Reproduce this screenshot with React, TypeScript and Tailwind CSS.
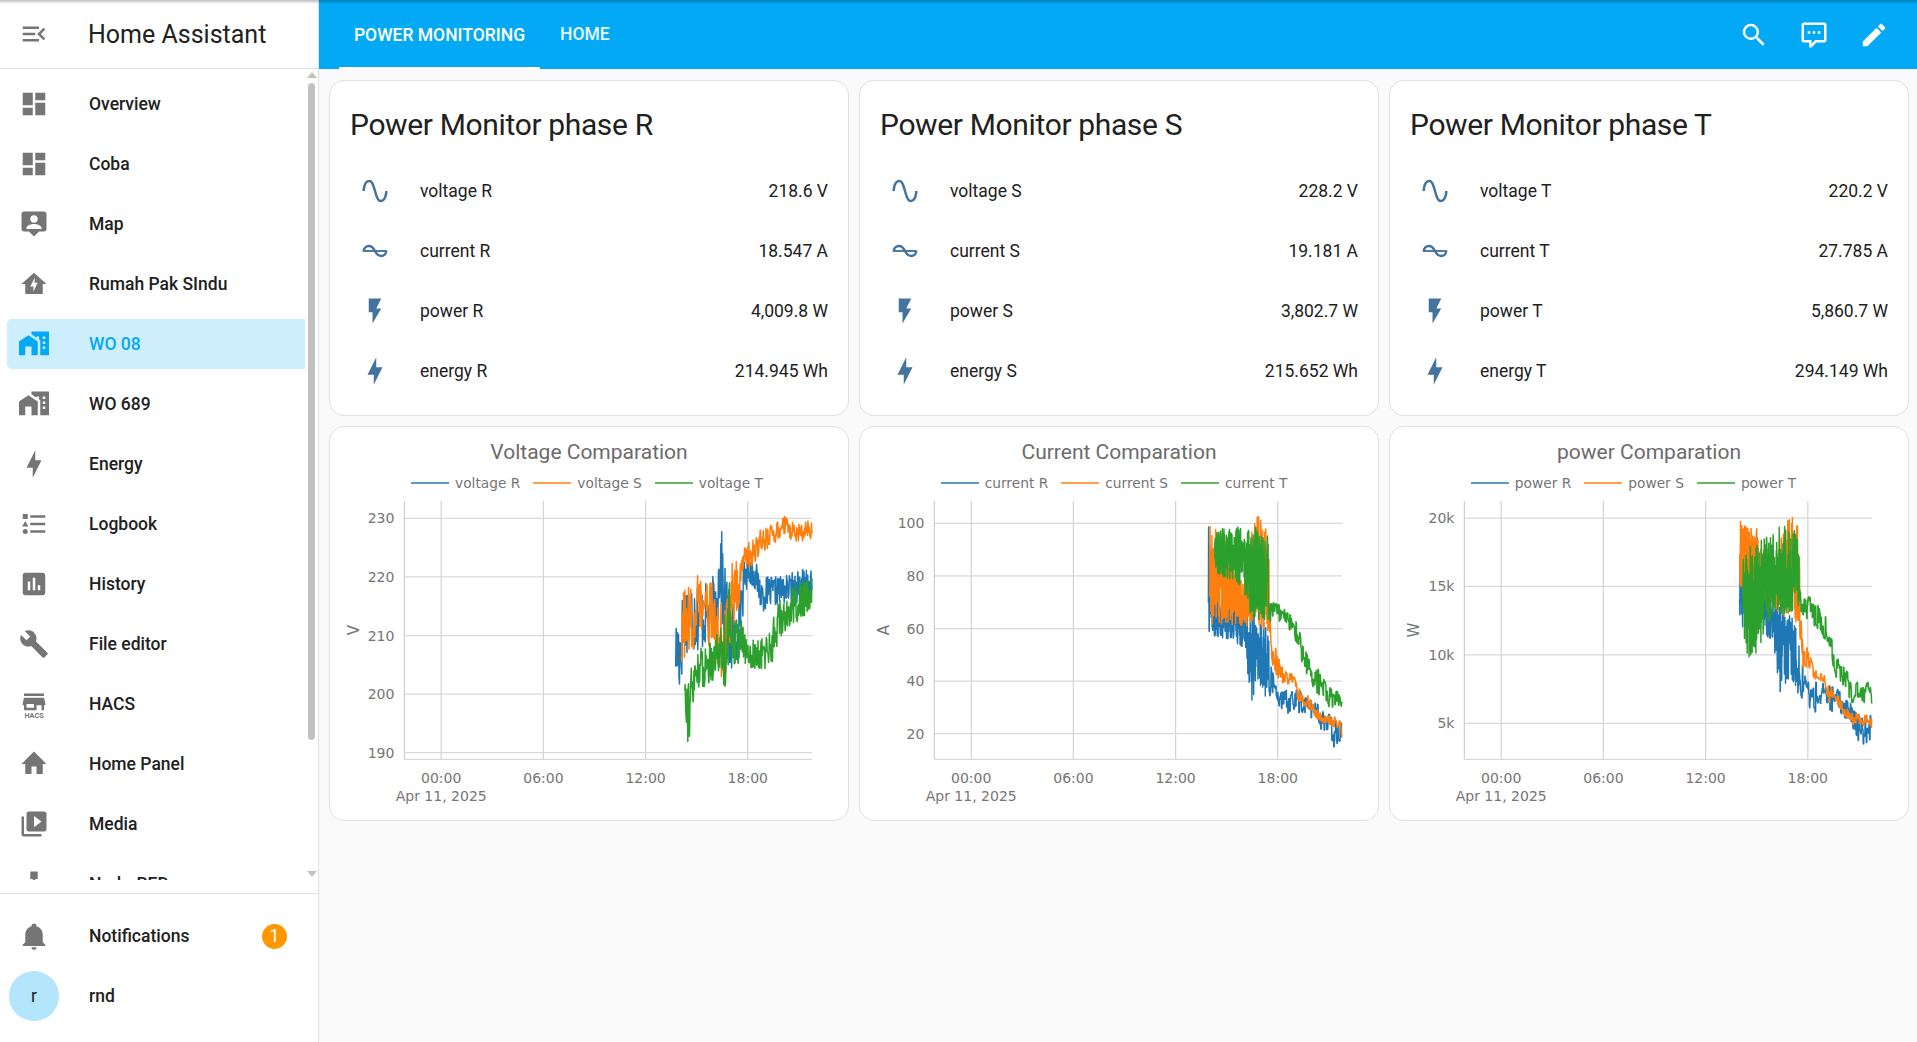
type Pt = [number, number, number];

const ICONS = {
  dashboard: "M13,3V9H21V3M13,21H21V11H13M3,21H11V15H3M3,13H11V3H3V13Z",
  map: "M4 2C2.9 2 2 2.9 2 4V16C2 17.1 2.9 18 4 18H8L12 22L16 18H20C21.1 18 22 17.1 22 16V4C22 2.9 21.1 2 20 2H4M12 5C13.66 5 15 6.34 15 8S13.66 11 12 11 9 9.66 9 8 10.34 5 12 5M18 16H6V15C6 13 10 11.9 12 11.9S18 13 18 15V16Z",
  homeBolt: "M12 3L2 12H5V20H19V12H22L12 3ZM11.5 18V14H9L12.5 7V11H15L11.5 18Z",
  city: "M0,21V10L7.5,5L15,10V21H10V14H5V21H0M24,2V21H17V8.93L16,8.27V6H14V6.93L10,4.27V2H24M21,14H19V16H21V14M21,10H19V12H21V10M21,6H19V8H21V6Z",
  bolt: "M11 15H6L13 1V9H18L11 23V15Z",
  flash: "M7,2V13H10V22L17,10H13L17,2H7Z",
  sine: "M16.5,21C13.5,21 12.31,16.76 11.05,12.28C10.14,9.04 9,5 7.5,5C4.11,5 4,11.93 4,12H2C2,11.63 2.06,3 7.5,3C10.5,3 11.71,7.25 12.97,11.74C13.83,14.8 15,19 16.5,19C19.94,19 20.03,12.07 20.03,12H22.03C22.03,12.37 21.97,21 16.5,21Z",
  list: "M5,9.5L7.5,14H2.5L5,9.5M3,4H7V8H3V4M5,20A2,2 0 0,0 7,18A2,2 0 0,0 5,16A2,2 0 0,0 3,18A2,2 0 0,0 5,20M9,5V7H21V5H9M9,19H21V17H9V19M9,13H21V11H9V13Z",
  chart: "M19 3H5C3.9 3 3 3.9 3 5V19C3 20.1 3.9 21 5 21H19C20.1 21 21 20.1 21 19V5C21 3.9 20.1 3 19 3M9 17H7V10H9V17M13 17H11V7H13V17M17 17H15V13H17V17Z",
  wrench: "M22.7,19L13.6,9.9C14.5,7.6 14,4.9 12.1,3C10.1,1 7.1,0.6 4.7,1.7L9,6L6,9L1.6,4.7C0.4,7.1 0.9,10.1 2.9,12.1C4.8,14 7.5,14.5 9.8,13.6L18.9,22.7C19.3,23.1 19.9,23.1 20.3,22.7L22.6,20.4C23.1,20 23.1,19.3 22.7,19Z",
  home: "M10,20V14H14V20H19V12H22L12,2L2,12H5V20H10Z",
  media: "M4,6H2V20A2,2 0 0,0 4,22H18V20H4V6M20,2H8A2,2 0 0,0 6,4V16A2,2 0 0,0 8,18H20A2,2 0 0,0 22,16V4A2,2 0 0,0 20,2M12,14.5V5.5L18,10L12,14.5Z",
  sitemap: "M9,2V8H11V11H5C3.89,11 3,11.89 3,13V16H1V22H7V16H5V13H11V16H9V22H15V16H13V13H19V16H17V22H23V16H21V13C21,11.89 20.11,11 19,11H13V8H15V2H9Z",
  bell: "M21,19V20H3V19L5,17V11C5,7.9 7.03,5.17 10,4.29C10,4.19 10,4.1 10,4A2,2 0 0,1 12,2A2,2 0 0,1 14,4C14,4.1 14,4.19 14,4.29C16.97,5.17 19,7.9 19,11V17L21,19M14,21A2,2 0 0,1 12,23A2,2 0 0,1 10,21",
  menu: "M21,15.61L19.59,17L14.58,12L19.59,7L21,8.39L17.44,12L21,15.61M3,6H16V8H3V6M3,13V11H13V13H3M3,18V16H16V18H3Z",
  search: "M9.5,3A6.5,6.5 0 0,1 16,9.5C16,11.11 15.41,12.59 14.44,13.73L14.71,14H15.5L20.5,19L19,20.5L14,15.5V14.71L13.73,14.44C12.59,15.41 11.11,16 9.5,16A6.5,6.5 0 0,1 3,9.5A6.5,6.5 0 0,1 9.5,3M9.5,5C7,5 5,7 5,9.5C5,12 7,14 9.5,14C12,14 14,12 14,9.5C14,7 12,5 9.5,5Z",
  comment: "M9,22A1,1 0 0,1 8,21V18H4A2,2 0 0,1 2,16V4C2,2.89 2.9,2 4,2H20A2,2 0 0,1 22,4V16A2,2 0 0,1 20,18H13.9L10.2,21.71C10,21.9 9.75,22 9.5,22V22H9M10,16V19.08L13.08,16H20V4H4V16H10M17,11H15V9H17V11M13,11H11V9H13V11M9,11H7V9H9V11Z",
  pencil: "M20.71,7.04C21.1,6.65 21.1,6 20.71,5.63L18.37,3.29C18,2.9 17.35,2.9 16.96,3.29L15.12,5.12L18.87,8.87M3,17.25V21H6.75L17.81,9.93L14.06,6.18L3,17.25Z",
  store: "M12,15H6V12H12M21,13V11L20,7H4L3,11V13H4V17H14V13H18V17H20V13M20,3.5H4V5.5H20V3.5Z",
};

function Icon({ d, className }: { d: string; className?: string }) {
  return (
    <svg viewBox="0 0 24 24" fill="currentColor" className={"w-[30px] h-[30px] shrink-0 " + (className ?? "")}>
      <path d={d} />
    </svg>
  );
}

function HacsIcon() {
  return (
    <svg viewBox="0 0 24 24" fill="currentColor" className="w-[30px] h-[30px] shrink-0">
      <path d={ICONS.store} />
      <text x="12" y="23.4" textAnchor="middle" fontSize="5.8" fontWeight="700" fontFamily="Roboto, sans-serif">
        HACS
      </text>
    </svg>
  );
}

function CurrentIcon() {
  return (
    <svg viewBox="0 0 24 24" fill="none" stroke="currentColor" strokeWidth="2" className="w-[30px] h-[30px] shrink-0">
      <path d="M3 12.5C3 9.5 5 8 7.2 8C9.6 8 11 10 12 12C13 14 14.6 16 16.8 16C19 16 21 14.5 21 11.5" />
      <path d="M3 12H21" strokeWidth="1.5" />
    </svg>
  );
}

// seeded so the noisy traces come out the same on every run
function makeRandom(seed: number) {
  let s = seed;
  return () => {
    s = (s * 1664525 + 1013904223) % 4294967296;
    return s / 4294967296;
  };
}

// after tailFrom the signal calms down: samples are held longer so it looks stepped, not solid
function tracePath(env: Pt[], seed: number, n: number, tailFrom: number, toY: (v: number) => number) {
  const rand = makeRandom(seed);
  const start = env[0][0];
  const end = env[env.length - 1][0];
  let r = 0.5;
  let seg = 0;
  let d = "";
  for (let i = 0; i <= n; i++) {
    const t = start + ((end - start) * i) / n;
    while (seg < env.length - 2 && t > env[seg + 1][0]) seg++;
    const a = env[seg];
    const b = env[seg + 1];
    const k = (t - a[0]) / (b[0] - a[0]);
    const lo = a[1] + (b[1] - a[1]) * k;
    const hi = a[2] + (b[2] - a[2]) * k;
    if (t < tailFrom || i % 3 === 0) r = rand();
    const x = 110.2 + 17.03 * t;
    d += (i ? "L" : "M") + x.toFixed(2) + " " + toY(lo + (hi - lo) * r).toFixed(2);
  }
  return d;
}

const COLORS = ["#1f77b4", "#ff7f0e", "#2ca02c"];

const charts = [
  {
    title: "Voltage Comparation",
    unit: "V",
    names: ["voltage R", "voltage S", "voltage T"],
    legendPad: "pr-[4px]",
    ticks: [
      ["230", 230],
      ["220", 220],
      ["210", 210],
      ["200", 200],
      ["190", 190],
    ] as [string, number][],
    top: [230, 23.3],
    bottom: [190, 257.7],
    n: 290,
    tailFrom: 99,
    series: [
      [[13.77, 202, 213], [14, 199, 216], [14.3, 207, 219], [14.8, 207, 221], [15.3, 207, 219], [15.8, 209, 219], [16.2, 211, 222], [16.4, 216, 230], [16.6, 206, 224], [16.9, 203, 218], [17.3, 203, 215], [17.6, 211, 221], [18, 219, 224.5], [18.4, 218, 223], [18.8, 214, 220], [19.5, 215, 220], [20.5, 215.5, 220.5], [21, 215.5, 222], [21.77, 215.5, 221]],
      [[14.1, 203, 216], [14.3, 205, 218], [14.8, 207, 219], [15, 211, 222], [15.5, 209, 219], [16, 207, 219], [16.4, 203, 217], [16.55, 199, 214], [16.9, 207, 222], [17.4, 212, 223], [17.7, 221, 225], [18.3, 221.5, 226.5], [18.8, 223.5, 228.5], [19.5, 225.5, 229], [20.2, 227.5, 230.5], [20.8, 225.5, 229], [21.77, 226.5, 230]],
      [[14.3, 199, 205], [14.5, 191, 204], [14.8, 195, 206], [15, 201, 208], [15.5, 201, 208], [15.8, 202, 210], [16.3, 203, 212], [16.6, 200, 214], [16.9, 205, 220], [17.2, 205, 214], [17.6, 205, 213], [18, 204, 210], [18.5, 204, 209], [19, 204, 210], [19.4, 205, 212], [19.8, 209, 216], [20.4, 211, 217], [20.8, 212, 219], [21.3, 213, 219.5], [21.77, 215, 220]],
    ] as Pt[][],
  },
  {
    title: "Current Comparation",
    unit: "A",
    names: ["current R", "current S", "current T"],
    legendPad: "pr-[10px]",
    ticks: [
      ["100", 100],
      ["80", 80],
      ["60", 60],
      ["40", 40],
      ["20", 20],
    ] as [string, number][],
    top: [100, 28.3],
    bottom: [20, 238.7],
    n: 620,
    tailFrom: 17.5,
    series: [
      [[13.93, 58, 100], [14.5, 56, 72], [15, 56, 70], [15.5, 55, 75], [16, 52, 70], [16.5, 32, 68], [16.8, 40, 60], [17.2, 35, 64], [17.5, 32, 55], [17.8, 36, 40], [18.3, 26, 36], [18.8, 28, 38], [19.4, 28, 36], [20, 26, 34], [20.5, 22, 30], [21, 19, 28], [21.3, 15, 26], [21.77, 18, 26]],
      [[14, 60, 101], [14.4, 62, 98], [15, 60, 95], [15.5, 62, 84], [16, 60, 78], [16.4, 62, 100], [16.9, 60, 103], [17.45, 58, 98], [17.6, 44, 60], [18, 40, 50], [18.4, 39, 45], [19, 38, 42], [19.2, 31, 38], [20, 28, 33], [20.5, 24, 28], [21.7, 22, 26], [21.77, 18, 24]],
      [[14.3, 82, 98], [15, 78, 98], [15.5, 78, 99], [16, 74, 99], [16.4, 65, 99], [16.8, 62, 99], [17.45, 62, 96], [17.5, 62, 70], [18, 62, 72], [18.5, 62, 67], [19, 55, 64], [19.5, 45, 55], [20, 38, 48], [20.5, 33, 44], [21, 30, 37], [21.5, 30, 40], [21.77, 28, 33]],
    ] as Pt[][],
  },
  {
    title: "power Comparation",
    unit: "W",
    names: ["power R", "power S", "power T"],
    legendPad: "pr-[31px]",
    ticks: [
      ["20k", 20],
      ["15k", 15],
      ["10k", 10],
      ["5k", 5],
    ] as [string, number][],
    top: [20, 23],
    bottom: [5, 228.3],
    n: 620,
    tailFrom: 17.5,
    series: [
      [[14, 12, 18.5], [14.5, 12, 17], [15, 13, 19], [15.5, 11.5, 14.5], [16, 10.8, 14.4], [16.4, 6.8, 14], [16.8, 8, 13], [17.2, 8, 13], [17.6, 6.5, 10], [17.9, 7.5, 8.3], [18.2, 5.5, 8], [18.6, 6, 8], [19.2, 6, 8], [19.8, 5.5, 7.5], [20.4, 5, 7], [20.9, 3.8, 5.8], [21.3, 3.3, 5.5], [21.77, 4, 5.7]],
      [[14, 15, 19.8], [14.5, 14, 19.3], [15, 14, 19.4], [15.5, 14, 17], [16, 13.5, 16.5], [16.5, 12.5, 19], [17, 13, 20.2], [17.45, 12, 19.5], [17.7, 9, 11], [18, 9, 10.5], [18.4, 8.2, 9], [19, 8, 8.5], [19.2, 6.5, 8], [19.8, 6.2, 7], [20.4, 5, 6], [21.77, 4.6, 5.5]],
      [[14.2, 11, 18], [14.5, 9.8, 18], [15, 10, 18], [15.3, 11, 19], [16, 13, 19], [16.5, 13, 19.5], [17, 13, 19.7], [17.45, 13, 19], [17.6, 13, 14], [18, 12.5, 14.5], [18.6, 11.8, 13.7], [19.2, 10.8, 12.5], [19.6, 8.5, 10], [20.2, 7.5, 9], [20.6, 6.5, 8.5], [21.2, 6, 8], [21.6, 7, 8.3], [21.77, 6, 7]],
    ] as Pt[][],
  },
];

function ChartCard({ chart, index }: { chart: (typeof charts)[number]; index: number }) {
  const toY = (v: number) =>
    chart.top[1] + ((v - chart.top[0]) / (chart.bottom[0] - chart.top[0])) * (chart.bottom[1] - chart.top[1]);
  return (
    <div className="h-[395px] bg-white border border-[#e0e0e0] rounded-[15px] flex flex-col">
      <div className="mt-[11px] h-[28px] leading-[28px] text-center text-[21px] text-[#6b6b6b]">{chart.title}</div>
      <div
        className={
          "mt-[7px] h-[20px] flex items-center justify-center gap-[13px] text-[13.75px] text-[#757575] font-['DejaVu_Sans',sans-serif] " +
          chart.legendPad
        }
      >
        {chart.names.map((name, i) => (
          <div key={name} className="flex items-center gap-[6px]">
            <span
              className={
                "w-[38px] h-[2px] opacity-75 " + (i === 0 ? "bg-[#1f77b4]" : i === 1 ? "bg-[#ff7f0e]" : "bg-[#2ca02c]")
              }
            />
            <span>{name}</span>
          </div>
        ))}
      </div>
      <svg className="mt-[2px] ml-[1px] w-[517px] h-[324px]" fontFamily="'DejaVu Sans', sans-serif" fontSize="14" fill="#757575">
        {[110.2, 212.4, 314.6, 416.8].map((x) => (
          <line key={x} x1={x} x2={x} y1="6" y2="264.3" stroke="#d4d4d4" strokeWidth="1.25" />
        ))}
        {chart.ticks.map(([label, v]) => (
          <g key={label}>
            <line x1="73.4" x2="481" y1={toY(v)} y2={toY(v)} stroke="#d8d8d8" strokeWidth="1.25" />
            <text x="63.4" y={toY(v) + 5} textAnchor="end">
              {label}
            </text>
          </g>
        ))}
        <line x1="73.4" x2="73.4" y1="6" y2="264.3" stroke="#cfcfcf" strokeWidth="1.25" />
        <line x1="73.4" x2="481" y1="264.3" y2="264.3" stroke="#d8d8d8" strokeWidth="1.25" />
        {chart.series.map((env, i) => (
          <path
            key={i}
            d={tracePath(env, 17 + index * 101 + i * 37, chart.n, chart.tailFrom, toY)}
            fill="none"
            stroke={COLORS[i]}
            strokeWidth="1.5"
            strokeLinejoin="round"
          />
        ))}
        {["00:00", "06:00", "12:00", "18:00"].map((label, i) => (
          <text key={label} x={110.2 + i * 102.2} y="288" textAnchor="middle">
            {label}
          </text>
        ))}
        <text x="110.2" y="306" textAnchor="middle">
          Apr 11, 2025
        </text>
        <text x="23" y="135" fontSize="15" textAnchor="middle" dominantBaseline="central" transform="rotate(-90 23 135)">
          {chart.unit}
        </text>
      </svg>
    </div>
  );
}

const phases = [
  { p: "R", v: "218.6 V", c: "18.547 A", w: "4,009.8 W", e: "214.945 Wh" },
  { p: "S", v: "228.2 V", c: "19.181 A", w: "3,802.7 W", e: "215.652 Wh" },
  { p: "T", v: "220.2 V", c: "27.785 A", w: "5,860.7 W", e: "294.149 Wh" },
];

function Row({ icon, label, value }: { icon: React.ReactNode; label: string; value: string }) {
  return (
    <div className="h-[50px] flex items-center text-[17.5px] text-[#212121]">
      <div className="w-[50px] flex justify-center text-[#44739e]">{icon}</div>
      <div className="ml-[20px]">{label}</div>
      <div className="ml-auto">{value}</div>
    </div>
  );
}

function PhaseCard({ phase }: { phase: (typeof phases)[number] }) {
  return (
    <div className="h-[336px] bg-white border border-[#e0e0e0] rounded-[15px] px-[20px]">
      <div className="h-[85px] flex items-center text-[30px] tracking-[-0.012em] text-[#212121] pt-[2px]">
        Power Monitor phase {phase.p}
      </div>
      <div className="flex flex-col gap-[10px]">
        <Row icon={<Icon d={ICONS.sine} />} label={"voltage " + phase.p} value={phase.v} />
        <Row icon={<CurrentIcon />} label={"current " + phase.p} value={phase.c} />
        <Row icon={<Icon d={ICONS.flash} />} label={"power " + phase.p} value={phase.w} />
        <Row icon={<Icon d={ICONS.bolt} />} label={"energy " + phase.p} value={phase.e} />
      </div>
    </div>
  );
}

const navItems = [
  { name: "Overview", icon: <Icon d={ICONS.dashboard} /> },
  { name: "Coba", icon: <Icon d={ICONS.dashboard} /> },
  { name: "Map", icon: <Icon d={ICONS.map} /> },
  { name: "Rumah Pak SIndu", icon: <Icon d={ICONS.homeBolt} /> },
  { name: "WO 08", icon: <Icon d={ICONS.city} />, active: true },
  { name: "WO 689", icon: <Icon d={ICONS.city} /> },
  { name: "Energy", icon: <Icon d={ICONS.bolt} /> },
  { name: "Logbook", icon: <Icon d={ICONS.list} /> },
  { name: "History", icon: <Icon d={ICONS.chart} /> },
  { name: "File editor", icon: <Icon d={ICONS.wrench} /> },
  { name: "HACS", icon: <HacsIcon /> },
  { name: "Home Panel", icon: <Icon d={ICONS.home} /> },
  { name: "Media", icon: <Icon d={ICONS.media} /> },
  { name: "Node-RED", icon: <Icon d={ICONS.sitemap} /> },
];

function Sidebar() {
  return (
    <aside className="w-[319px] shrink-0 h-full bg-white border-r border-[#e0e0e0] flex flex-col">
      <div className="h-[69px] shrink-0 border-b border-[#e0e0e0] flex items-center pl-[19px] text-[#757575]">
        <Icon d={ICONS.menu} />
        <span className="ml-[39px] pt-[1px] text-[25px] text-[#212121]">Home Assistant</span>
      </div>
      <div className="h-[811px] shrink-0 flex">
        <nav className="w-[305px] overflow-hidden pt-[10px] pl-[7px] flex flex-col gap-[10px]">
          {navItems.map((item) => (
            <div
              key={item.name}
              className={
                "h-[50px] shrink-0 flex items-center pl-[12px] rounded-l-[5px] rounded-r-none text-[17.5px] font-medium " +
                (item.active ? "bg-[#cdeefd] text-[#03a9f4]" : "text-[#757575]")
              }
            >
              {item.icon}
              <span className={"ml-[40px] " + (item.active ? "" : "text-[#212121]")}>{item.name}</span>
            </div>
          ))}
        </nav>
        <div className="w-[13px] flex flex-col items-center pt-[3px]">
          <div className="w-0 h-0 border-x-[5px] border-x-transparent border-b-[6px] border-b-[#c1c1c1]" />
          <div className="mt-[5px] w-[7px] h-[657px] rounded-full bg-[#c1c1c1]" />
          <div className="mt-auto mb-[3px] w-0 h-0 border-x-[5px] border-x-transparent border-t-[6px] border-t-[#c1c1c1]" />
        </div>
      </div>
      <div className="mt-[13px] border-t border-[#e0e0e0] pt-[17px] flex flex-col gap-[10px] text-[17.5px] font-medium text-[#212121]">
        <div className="h-[50px] flex items-center pl-[19px] pr-[31px]">
          <Icon d={ICONS.bell} className="text-[#757575]" />
          <span className="ml-[40px]">Notifications</span>
          <span className="ml-auto w-[25px] h-[25px] rounded-full bg-[#ff9800] text-white font-normal flex items-center justify-center">
            1
          </span>
        </div>
        <div className="h-[50px] flex items-center pl-[9px]">
          <div className="w-[50px] h-[50px] rounded-full bg-[#b3e5fc] flex items-center justify-center font-normal">r</div>
          <span className="ml-[30px]">rnd</span>
        </div>
      </div>
    </aside>
  );
}

function Header() {
  return (
    <header className="h-[69px] shrink-0 bg-[#03a9f4] text-white flex items-center">
      <div className="ml-[20px] flex h-full text-[17.5px] font-medium">
        <div className="w-[201px] flex items-center justify-center border-b-[2.5px] border-white pt-[2.5px]">
          POWER MONITORING
        </div>
        <div className="px-[20px] flex items-center text-white/90">HOME</div>
      </div>
      <div className="ml-auto mr-[28px] flex gap-[30px]">
        <Icon d={ICONS.search} />
        <Icon d={ICONS.comment} />
        <Icon d={ICONS.pencil} />
      </div>
    </header>
  );
}

export default function App() {
  return (
    <div className="relative w-full h-screen flex overflow-hidden bg-[#fafafa] font-['Roboto',sans-serif]">
      <div className="absolute inset-x-0 top-0 h-[4px] bg-gradient-to-b from-black/25 to-transparent" />
      <Sidebar />
      <main className="flex-1 min-w-0 flex flex-col">
        <Header />
        <div className="pt-[11px] pl-[10px] pr-[8px] grid grid-cols-3 gap-[10px]">
          {phases.map((phase) => (
            <PhaseCard key={phase.p} phase={phase} />
          ))}
          {charts.map((chart, i) => (
            <ChartCard key={chart.title} chart={chart} index={i} />
          ))}
        </div>
      </main>
    </div>
  );
}
